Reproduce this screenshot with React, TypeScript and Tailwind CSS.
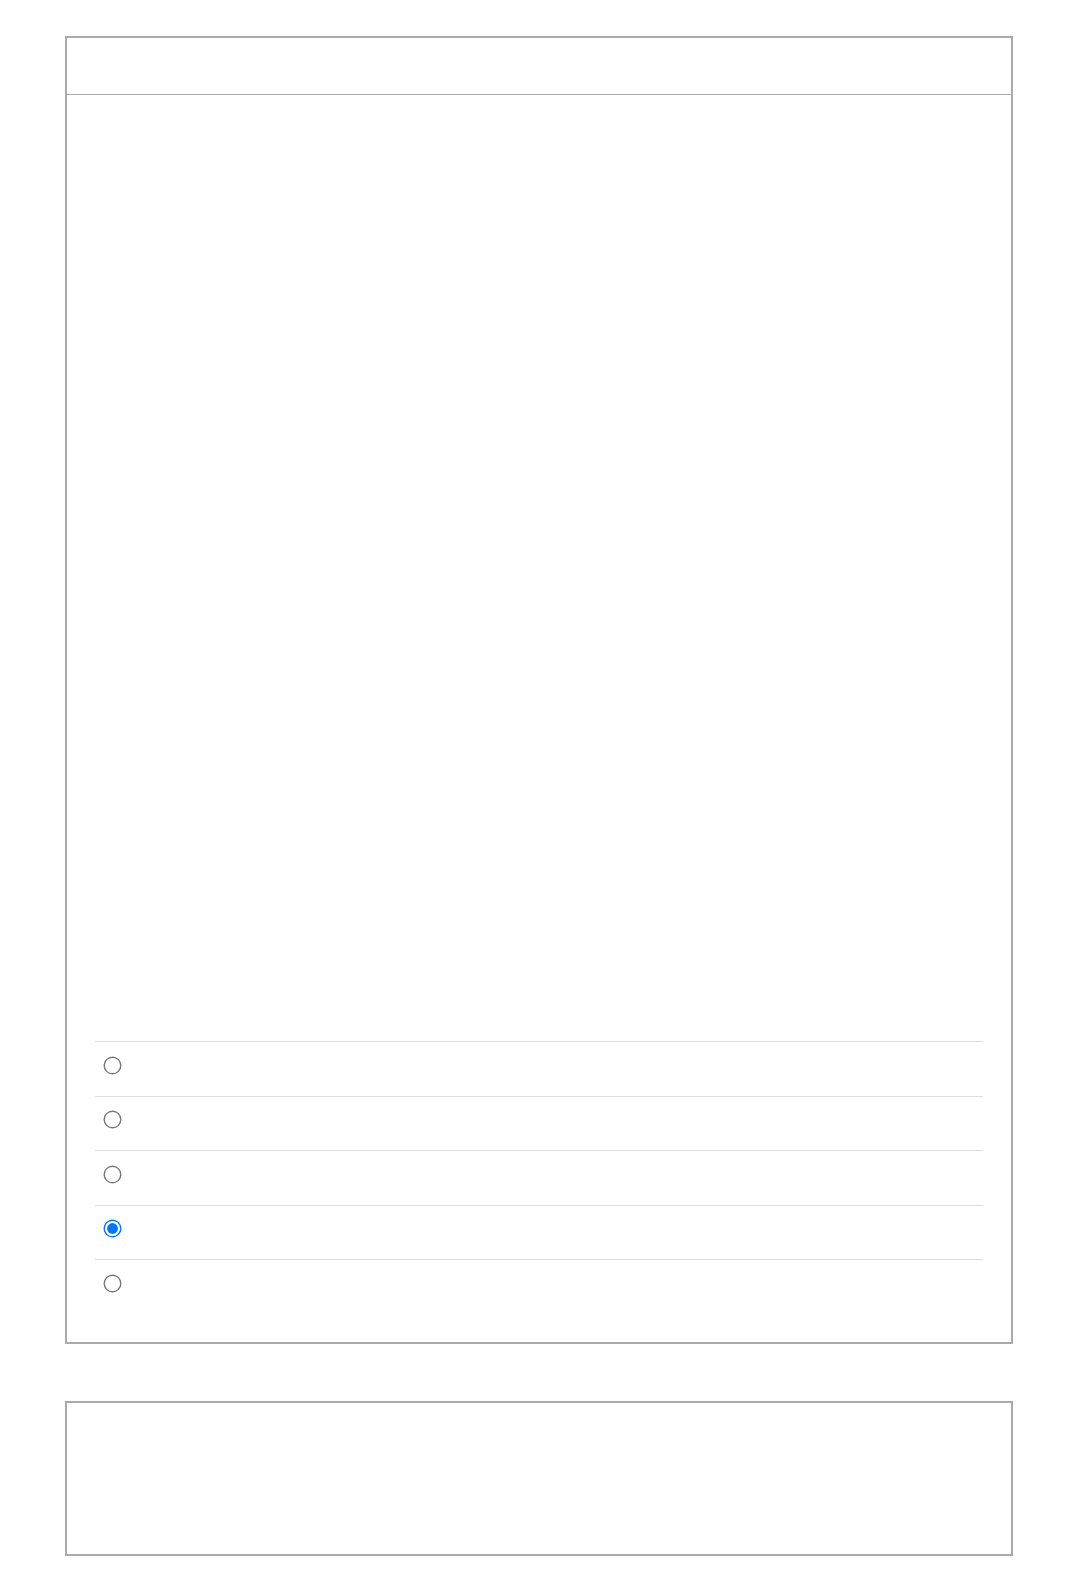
const options = ['a', 'b', 'c', 'd', 'e'];

function OptionRow({ value, checked }: { value: string; checked: boolean }) {
  return (
    <label className="flex h-[54.6px] items-start border-t border-[#dddddd] pt-[14px] pl-2">
      <span className="flex h-[18px] w-[18px] items-center justify-center">
        <input
          type="radio"
          name="choice"
          value={value}
          defaultChecked={checked}
          className="m-0 h-[13px] w-[13px] scale-[1.385]"
        />
      </span>
    </label>
  );
}

export default function App() {
  return (
    <div className="min-h-[1570px] bg-white pt-9 font-['Liberation_Sans',sans-serif]">
      <div className="ml-[65px] w-[948px] border-2 border-[#aaaaaa]">
        <div className="h-[57px] border-b border-[#aaaaaa]" />
        <div className="flex flex-col p-7">
          <div className="h-[918px]" />
          <div className="flex flex-col">
            {options.map((opt, i) => (
              <OptionRow key={opt} value={opt} checked={i === 3} />
            ))}
          </div>
        </div>
      </div>
      <div className="mt-[57px] ml-[65px] h-[155px] w-[948px] border-2 border-[#aaaaaa]" />
    </div>
  );
}
